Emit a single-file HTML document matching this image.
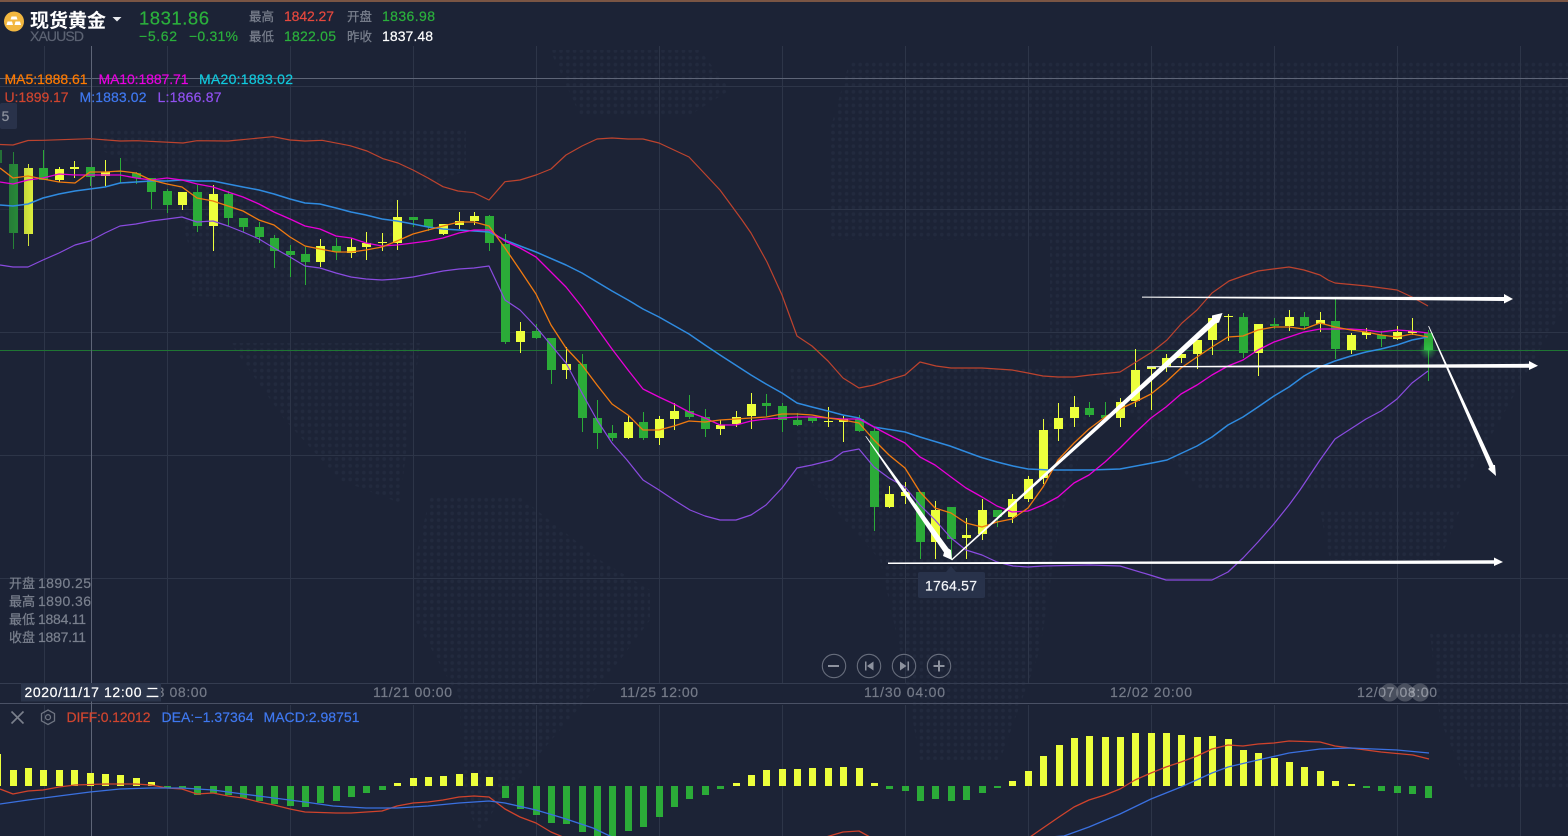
<!DOCTYPE html>
<html lang="zh">
<head>
<meta charset="utf-8">
<title>现货黄金 XAUUSD</title>
<style>
html,body{margin:0;padding:0;background:#1c2336;width:1568px;height:836px;overflow:hidden}
svg{display:block}
text{font-family:"Liberation Sans","Noto Sans CJK SC",sans-serif;font-size:14px;fill:currentColor;stroke:currentColor;stroke-width:.2}
.gr{color:#7a808e}
.cn{font-size:12.5px}
.cn2{font-size:13px}
.ax{color:#747a88}
</style>
</head>
<body>
<svg width="1568" height="836" viewBox="0 0 1568 836" xmlns="http://www.w3.org/2000/svg">
<defs>
<pattern id="dots" width="6.8" height="6.8" patternUnits="userSpaceOnUse"><circle cx="3.4" cy="3.4" r="1.8" fill="#222a3e"/></pattern>
<clipPath id="macd"><rect x="0" y="704" width="1568" height="132"/></clipPath>
<linearGradient id="dim" x1="0" x2="1" y1="0" y2="0"><stop offset="0" stop-color="#1c2336" stop-opacity=".45"/><stop offset="1" stop-color="#1c2336" stop-opacity="0"/></linearGradient>
<radialGradient id="glow"><stop offset="0" stop-color="#35d050" stop-opacity=".6"/><stop offset="1" stop-color="#35d050" stop-opacity="0"/></radialGradient>
</defs>
<rect width="1568" height="836" fill="#1c2336"/>
<rect width="1568" height="2" fill="#7a5544"/>

<!-- world map dots -->
<g fill="url(#dots)">
<polygon points="100,128 466,128 466,170 400,200 400,300 300,300 190,296 190,250 170,180 100,150"/>
<polygon points="550,50 700,50 730,90 690,115 580,115"/>
<polygon points="230,343 420,343 410,420 400,503 340,480 285,420"/>
<polygon points="430,497 520,497 600,560 650,590 650,620 620,660 560,730 500,800 480,833 462,800 460,700 415,620 415,560"/>
<polygon points="850,60 1568,60 1568,300 1500,420 1460,490 1320,490 1200,490 1100,380 1050,366 1050,240 830,240 830,130"/>
<polygon points="790,366 1060,366 1090,420 1060,520 1040,650 1000,760 920,760 900,650 880,560 800,470"/>
<polygon points="1320,510 1460,510 1440,560 1330,560"/>
<polygon points="1430,633 1568,633 1568,790 1470,790 1440,720"/>
</g>

<!-- grid -->
<path d="M44.5 46V683M167.5 46V683M290.5 46V683M413.5 46V683M536.5 46V683M659.5 46V683M782.5 46V683M905.5 46V683M1028.5 46V683M1151.5 46V683M1274.5 46V683M1397.5 46V683M1520.5 46V683M44.500 705V836M167.500 705V836M290.500 705V836M413.500 705V836M536.500 705V836M659.500 705V836M782.500 705V836M905.500 705V836M1028.500 705V836M1151.500 705V836M1274.500 705V836M1397.500 705V836M1520.500 705V836M0 86.5H1568M0 209.5H1568M0 332.5H1568M0 455.5H1568M0 578.5H1568" stroke="#2d3548" stroke-width="1" fill="none"/>
<path d="M0 683.5H1568" stroke="#343c50" stroke-width="1"/>
<path d="M0 703.5H1568" stroke="#4a5165" stroke-width="1"/>
<path d="M0 350.5H1568" stroke="#1f7533" stroke-width="1"/>
<path d="M0 78.5H1568M91.5 46V836" stroke="#5e6577" stroke-width="1" fill="none"/>

<!-- candles -->
<g shape-rendering="crispEdges">
<path stroke="#2bab38" stroke-width="1" fill="none" d="M13.5 152V249M43.5 150V180M90.5 167V186M120.5 158V183M136.5 172V184M151.5 178V209M167.5 189V213M197.5 185V232M228.5 191V226M243.5 218V232M259.5 222V243M274.5 235V268M290.5 245V277M305.5 247V285M336.5 238V260M413.5 217V227M428.5 219V231M489.5 215V251M505.5 234V344M536.5 324V339M551.5 338V384M582.5 354V432M597.5 400V449M612.5 425V441M643.5 412V440M689.5 395V419M705.5 409V437M766.5 394V416M782.5 403V432M797.5 413V426M812.5 417V423M859.5 415V432M874.5 428V531M920.5 492V559M951.5 507V560M997.5 510V527M1089.5 402V417M1105.5 402V420M1243.5 313V358M1274.5 318V329M1304.5 312V330M1335.5 299V359M1381.5 331V347M1428.5 330V381"/>
<path fill="#2bab38" d="M0 150h2V163H0zM9 164h9V233h-9zM39 168h9V180h-9zM86 167h9V177h-9zM116 171h9V172h-9zM132 173h9V178h-9zM147 178h9V192h-9zM163 191h9V205h-9zM193 192h9V226h-9zM224 194h9V218h-9zM239 218h9V227h-9zM255 227h9V237h-9zM270 238h9V251h-9zM286 251h9V255h-9zM301 254h9V262h-9zM332 246h9V252h-9zM409 217h9V220h-9zM424 219h9V227h-9zM485 216h9V243h-9zM501 244h9V342h-9zM532 331h9V338h-9zM547 338h9V370h-9zM578 364h9V418h-9zM593 418h9V433h-9zM608 433h9V438h-9zM639 422h9V438h-9zM685 411h9V417h-9zM701 417h9V429h-9zM762 403h9V406h-9zM778 406h9V420h-9zM793 420h9V425h-9zM808 417h9V421h-9zM855 419h9V431h-9zM870 431h9V507h-9zM916 492h9V542h-9zM947 507h9V539h-9zM993 510h9V517h-9zM1085 408h9V415h-9zM1101 415h9V418h-9zM1239 317h9V353h-9zM1270 324h9V326h-9zM1300 317h9V326h-9zM1331 321h9V349h-9zM1377 335h9V339h-9zM1424 333h9V350h-9z"/>
<path stroke="#ecff3c" stroke-width="1" fill="none" d="M28.5 164V246M59.5 167V182M74.5 161V178M105.5 160V186M182.5 192V210M213.5 185V251M320.5 239V267M351.5 238V258M366.5 232V260M382.5 233V251M397.5 200V250M443.5 224V235M459.5 212V229M474.5 212V225M520.5 322V353M566.5 347V379M628.5 416V439M659.5 416V445M674.5 403V430M720.5 420V435M736.5 411V427M751.5 393V429M828.5 407V427M843.5 416V442M889.5 486V508M905.5 482V504M935.5 501V559M966.5 518V559M982.5 499V540M1012.5 494V523M1028.5 476V502M1043.5 419V484M1058.5 403V441M1074.5 396V427M1120.5 398V427M1135.5 349V407M1151.5 367V410M1166.5 354V372M1181.5 354V363M1197.5 340V369M1212.5 316V355M1228.5 314V341M1258.5 324V376M1289.5 310V331M1320.5 312V332M1351.5 333V354M1366.5 328V339M1397.5 326V340M1412.5 318V335"/>
<path fill="#ecff3c" d="M24 168h9V234h-9zM55 169h9V180h-9zM70 167h9V169h-9zM101 172h9V176h-9zM178 192h9V205h-9zM209 194h9V226h-9zM316 246h9V262h-9zM347 247h9V253h-9zM362 243h9V247h-9zM378 242h9V243h-9zM393 217h9V243h-9zM439 224h9V234h-9zM455 221h9V225h-9zM470 216h9V221h-9zM516 331h9V342h-9zM562 364h9V370h-9zM624 422h9V438h-9zM655 419h9V438h-9zM670 411h9V419h-9zM716 425h9V429h-9zM732 417h9V424h-9zM747 404h9V416h-9zM824 421h9V422h-9zM839 419h9V422h-9zM885 494h9V507h-9zM901 492h9V496h-9zM931 510h9V542h-9zM962 535h9V538h-9zM978 510h9V534h-9zM1008 499h9V517h-9zM1024 479h9V499h-9zM1039 430h9V478h-9zM1054 418h9V429h-9zM1070 407h9V418h-9zM1116 402h9V418h-9zM1131 370h9V401h-9zM1147 367h9V369h-9zM1162 358h9V366h-9zM1177 354h9V358h-9zM1193 340h9V354h-9zM1208 318h9V340h-9zM1224 316h9V317h-9zM1254 324h9V353h-9zM1285 317h9V326h-9zM1316 320h9V324h-9zM1347 335h9V350h-9zM1362 332h9V335h-9zM1393 332h9V339h-9zM1408 331h9V333h-9z"/>
</g>
<rect x="0" y="140" width="40" height="120" fill="url(#dim)"/>
<circle cx="1428" cy="350" r="9" fill="url(#glow)"/>

<!-- bollinger / MA -->
<g fill="none" stroke-linejoin="round">
<polyline stroke="#bd432e" stroke-width="1.200" points="0,144.5 13,145 28,140.5 43,140.3 90,138.7 120,141 137,140.7 183,143 197,140.7 228,141 273,136.7 290,140 305,141 322,140.3 350,145.7 367,151 383,158.7 398,163 413,170 428,178 443,186.7 458,191 474,192.7 489,200 505,181.7 520,180 536,175 551,169 566,155 582,146 597,139 612,138 628,139 643,139 659,143 674,150 689,157 705,174 720,190 742,220 751,233 767,262 782,295 797,336 812,346 828,361 843,378 859,388 874,385 888,380 905,375 920,362 936,366 951,368 966,368 982,368 997,369 1012,370 1028,373 1043,376 1058,377 1074,377 1090,375 1120,372 1152,352 1167,340 1182,323 1197,310 1212,293 1229,281 1243,276 1258,271 1273,269 1289,267 1304,270 1320,275 1328,280 1335,283 1367,286 1397,290 1412,297 1428,306"/>
<polyline stroke="#8a4be0" stroke-width="1.200" points="0,265 13,267 28,267 43,260 59,253 75,245 90,241 105,233 120,226 136,224 151,221 167,219 182,217 197,222 213,221 228,226 243,232 259,239 274,248 290,257 305,266 320,268 336,273 351,277 366,279 382,280 397,279 413,277 428,274 443,271 459,269 474,268 489,266 505,300 520,310 536,327 551,345 566,363 582,393 597,420 612,443 627,460 643,480 659,490 674,500 690,510 705,516 720,520 736,520 751,515 766,505 782,488 797,468 812,465 832,460 843,452 859,449 874,467 889,478 905,487 920,505 935,520 951,538 966,550 982,555 997,562 1013,566 1028,567 1043,566 1090,565 1120,566 1150,575 1166,580 1181,580 1212,580 1228,572 1243,558 1258,542 1273,525 1289,505 1300,490 1320,460 1335,439 1366,419 1381,411 1397,399 1412,383 1428,371"/>
<polyline stroke="#2f8be0" stroke-width="1.500" points="0,205 13,206 28,204 43,198 59,194 75,191 90,189 105,187 120,183 136,182 151,181 167,181 182,180 197,181 213,181 228,184 243,187 259,190 274,194 290,199 305,203 320,204 336,208 351,212 366,215 382,219 397,221 413,224 428,227 443,229 459,230 474,231 489,232 505,240 520,246 536,252 566,265 582,273 612,291 628,300 643,309 659,317 689,334 705,345 720,355 751,375 766,384 782,393 797,403 812,407 828,411 843,415 859,418 874,427 905,432 920,437 950,446 980,457 997,462 1013,466 1028,469 1050,470 1090,470 1120,469 1152,463 1167,460 1182,453 1197,446 1212,437 1228,425 1243,417 1258,407 1274,396 1289,387 1304,376 1320,367 1335,361 1351,356 1366,352 1381,349 1397,345 1412,340 1428,337"/>
<polyline stroke="#e800d8" stroke-width="1.300" points="0,182 13,184 28,180 43,178 59,174 75,175 90,175 105,175 120,175 136,178 151,180 167,178 182,180 197,184 213,187 228,192 243,197 259,204 274,212 290,219 305,226 320,229 336,236 351,238 366,243 382,246 397,245 413,243 428,241 443,238 459,233 474,230 489,230 505,241 520,248 536,257 551,272 566,287 582,307 597,328 612,349 628,370 643,389 659,397 674,404 689,412 705,418 720,425 736,425 751,421 766,419 782,418 797,417 812,417 828,418 843,419 859,419 874,427 889,435 905,443 920,457 935,465 951,477 966,488 982,497 997,506 1012,512 1028,511 1043,505 1058,497 1074,483 1089,475 1105,462 1120,448 1135,433 1151,418 1166,407 1181,394 1197,385 1212,375 1228,366 1243,360 1258,350 1274,342 1289,337 1304,332 1320,329 1335,329 1351,329 1366,330 1381,332 1397,330 1412,331 1428,333"/>
<polyline stroke="#f07a10" stroke-width="1.300" points="0,168 13,178 28,176 43,179 59,182 75,183 90,172 105,172 120,171 136,173 151,180 167,184 182,187 197,198 213,201 228,206 243,211 259,220 274,225 290,237 305,246 320,249 336,252 351,252 366,250 382,247 397,241 413,234 428,230 443,226 459,222 474,222 489,226 505,248 520,270 536,294 551,325 566,348 582,365 597,385 612,404 628,415 643,430 659,430 674,426 689,421 705,422 720,420 736,419 751,418 766,417 782,414 797,414 812,415 828,418 843,420 859,423 874,440 889,455 905,468 920,492 935,508 951,513 966,523 982,527 997,522 1012,519 1028,508 1043,487 1058,460 1074,443 1089,429 1105,417 1120,409 1135,402 1151,394 1166,382 1181,368 1197,357 1212,347 1228,337 1243,336 1258,330 1274,327 1289,327 1304,329 1320,323 1335,327 1351,330 1366,332 1381,335 1397,337 1412,334 1428,337"/>
</g>

<!-- hand-drawn arrows -->
<g fill="#ffffff">
<polygon points="1142,296.6 1504,297 1504,294 1513,299 1504,303.5 1504,301 1142,297.6"/>
<polygon points="1147,366.2 1529,363.8 1529,361 1538,365.7 1529,370 1529,367.8 1147,367.2"/>
<polygon points="888,562.5 1494,560.2 1494,557.5 1503,562 1494,566 1494,563.800 888,564"/>
<polygon points="866,436 948.500,548.500 951,550 952,560 943,556 944,552.500 865.4,436.4"/>
<polygon points="952,560.5 1215.500,323.500 1219,322.5 1222.5,313 1212,315.5 1212,319 951.3,559.4"/>
<polygon points="1429,326 1493.500,465 1495,465 1496,476 1488,469 1489.500,467.500 1428.2,326.2"/>
</g>

<!-- tooltip -->
<path d="M946 572l5-6 5 6z" fill="#28324a"/>
<rect x="918" y="572" width="67" height="26" rx="2" fill="#28324a"/>
<text x="925" y="590.500" style="color:#f2f4f8" textLength="52">1764.57</text>

<!-- header -->
<circle cx="14" cy="21.5" r="10" fill="#f2b740"/>
<path d="M11.500 16.500h5l1 3h-7zM7.500 21.500h4.500l1 3.500h-6.500zM15.500 21.500h4.500l1 3.500h-6.500z" fill="#fff"/>
<text x="30" y="27" style="color:#ffffff;font-size:19px;font-weight:700;stroke-width:0">现货黄金</text>
<path d="M112.500 17h9l-4.500 4.500z" fill="#e8eaee"/>
<text x="30" y="41" style="color:#5c6373" textLength="54">XAUUSD</text>
<text x="139" y="24.500" style="color:#2bb03c;font-size:18.500px" textLength="70">1831.86</text>
<text x="139" y="41" style="color:#2bb03c" textLength="38">−5.62</text>
<text x="189" y="41" style="color:#2bb03c" textLength="49">−0.31%</text>
<text x="249" y="21" class="gr cn">最高</text>
<text x="284" y="21" style="color:#e6483e" textLength="50">1842.27</text>
<text x="347" y="21" class="gr cn">开盘</text>
<text x="382" y="21" style="color:#2bb03c" textLength="53">1836.98</text>
<text x="249" y="41" class="gr cn">最低</text>
<text x="284" y="41" style="color:#2bb03c" textLength="52">1822.05</text>
<text x="347" y="41" class="gr cn">昨收</text>
<text x="382" y="41" style="color:#ffffff" textLength="51">1837.48</text>

<!-- legends -->
<text x="4.500" y="84" style="color:#ff7a00" textLength="83">MA5:1888.61</text>
<text x="98.500" y="84" style="color:#e800e0" textLength="90">MA10:1887.71</text>
<text x="199" y="84" style="color:#10c8dc" textLength="94">MA20:1883.02</text>
<text x="4.500" y="102" style="color:#d0452f" textLength="64">U:1899.17</text>
<text x="79.500" y="102" style="color:#3f78f0" textLength="67">M:1883.02</text>
<text x="157.500" y="102" style="color:#9050f0" textLength="64">L:1866.87</text>
<rect x="0" y="103" width="17" height="26" rx="2" fill="#29324a"/>
<text x="1.500" y="121" style="color:#8d929e">5</text>

<!-- OHLC -->
<text x="9" y="588" class="gr cn2">开盘</text><text x="38" y="588" class="gr" textLength="53">1890.25</text>
<text x="9" y="606" class="gr cn2">最高</text><text x="38" y="606" class="gr" textLength="53">1890.36</text>
<text x="9" y="624" class="gr cn2">最低</text><text x="38" y="624" class="gr" textLength="48">1884.11</text>
<text x="9" y="642" class="gr cn2">收盘</text><text x="38" y="642" class="gr" textLength="48">1887.11</text>

<!-- zoom buttons -->
<g fill="none" stroke="#676d7c" stroke-width="1.100">
<circle cx="834" cy="666" r="11.700"/><circle cx="869" cy="666" r="11.700"/><circle cx="904" cy="666" r="11.700"/><circle cx="939" cy="666" r="11.700"/>
</g>
<path d="M828 665h11v2h-11zM933.500 665h11v2h-11zM938 660.500h2v11h-2z" fill="#8d929e"/>
<path d="M865 661.500h1.500v9H865zM873.500 661.500v9l-6.500-4.500zM907.500 661.500h1.500v9h-1.500zM900 661.500v9l6.500-4.500z" fill="#8d929e"/>

<!-- axis -->
<text x="128" y="697" class="ax" textLength="79">11/18 08:00</text>
<rect x="21" y="683" width="140" height="18.500" fill="#2b354b"/>
<text x="24.500" y="697" style="color:#ffffff" textLength="117">2020/11/17 12:00</text>
<text x="146" y="697" class="cn2" style="color:#ffffff">二</text>
<text x="373" y="697" class="ax" textLength="79">11/21 00:00</text>
<text x="620" y="697" class="ax" textLength="78">11/25 12:00</text>
<text x="864" y="697" class="ax" textLength="81">11/30 04:00</text>
<text x="1110" y="697" class="ax" textLength="82">12/02 20:00</text>
<text x="1357" y="697" class="ax" textLength="80">12/07 08:00</text>
<circle cx="1389.500" cy="692.500" r="9" fill="#fff" opacity=".2"/>
<circle cx="1405" cy="692.500" r="9" fill="#fff" opacity=".2"/>
<circle cx="1420" cy="692.500" r="9" fill="#fff" opacity=".2"/>

<!-- MACD -->
<path d="M11.500 711.500l12 12M23.500 711.500l-12 12" stroke="#7a808c" stroke-width="1.600" fill="none"/>
<path d="M48 710l6.500 3.600v7.300L48 724.500l-6.500-3.600v-7.300z" stroke="#6f7582" stroke-width="1.300" fill="none"/>
<circle cx="48" cy="717.200" r="2.500" stroke="#6f7582" stroke-width="1.300" fill="none"/>
<text x="66.500" y="722" style="color:#d0452f" textLength="84">DIFF:0.12012</text>
<text x="161.500" y="722" style="color:#3f78f0" textLength="92">DEA:−1.37364</text>
<text x="263.500" y="722" style="color:#3f78f0" textLength="96">MACD:2.98751</text>

<g clip-path="url(#macd)" shape-rendering="crispEdges">
<path fill="#ecff3c" d="M0 754h1V786H0zM10 770h7V786h-7zM25 768h7V786h-7zM40 770h7V786h-7zM56 770h7V786h-7zM71 770h7V786h-7zM87 773h7V786h-7zM102 774h7V786h-7zM117 775h7V786h-7zM133 778h7V786h-7zM148 782h7V786h-7zM394 783h7V786h-7zM410 778h7V786h-7zM425 777h7V786h-7zM440 776h7V786h-7zM456 774h7V786h-7zM471 773h7V786h-7zM486 777h7V786h-7zM733 783h7V786h-7zM748 775h7V786h-7zM763 770h7V786h-7zM779 769h7V786h-7zM794 769h7V786h-7zM809 768h7V786h-7zM825 768h7V786h-7zM840 767h7V786h-7zM856 768h7V786h-7zM871 783h7V786h-7zM1009 781h7V786h-7zM1025 771h7V786h-7zM1040 756h7V786h-7zM1056 745h7V786h-7zM1071 738h7V786h-7zM1086 736h7V786h-7zM1102 737h7V786h-7zM1117 737h7V786h-7zM1132 733h7V786h-7zM1148 733h7V786h-7zM1163 733h7V786h-7zM1178 735h7V786h-7zM1194 737h7V786h-7zM1209 736h7V786h-7zM1225 739h7V786h-7zM1240 750h7V786h-7zM1255 753h7V786h-7zM1271 758h7V786h-7zM1286 762h7V786h-7zM1301 767h7V786h-7zM1317 771h7V786h-7zM1332 781h7V786h-7zM1348 784h7V786h-7z"/>
<path fill="#2bab38" d="M164 786h7V788h-7zM179 786h7V788h-7zM194 786h7V795h-7zM210 786h7V793h-7zM225 786h7V795h-7zM240 786h7V798h-7zM256 786h7V801h-7zM271 786h7V804h-7zM287 786h7V806h-7zM302 786h7V807h-7zM317 786h7V803h-7zM333 786h7V801h-7zM348 786h7V797h-7zM363 786h7V793h-7zM379 786h7V790h-7zM502 786h7V798h-7zM517 786h7V809h-7zM533 786h7V815h-7zM548 786h7V823h-7zM563 786h7V824h-7zM579 786h7V832h-7zM594 786h7V836h-7zM609 786h7V836h-7zM625 786h7V831h-7zM640 786h7V827h-7zM656 786h7V817h-7zM671 786h7V807h-7zM686 786h7V799h-7zM702 786h7V795h-7zM717 786h7V789h-7zM886 786h7V789h-7zM902 786h7V791h-7zM917 786h7V801h-7zM932 786h7V799h-7zM948 786h7V801h-7zM963 786h7V800h-7zM979 786h7V793h-7zM994 786h7V788h-7zM1363 786h7V788h-7zM1378 786h7V791h-7zM1394 786h7V793h-7zM1409 786h7V794h-7zM1425 786h7V798h-7z"/>
</g>
<g clip-path="url(#macd)" fill="none" stroke-linejoin="round">
<polyline stroke="#d0432c" stroke-width="1.300" points="0,789 13,794 28,791 43,790 59,787 75,785 105,784 120,784 136,784 151,785 167,788 182,789 197,794 213,793 228,796 243,798 259,802 274,805 290,809 305,812 336,813 351,813 382,811 397,806 413,803 428,802 443,800 459,797 474,796 489,797 505,809 520,817 536,823 551,832 563,837 826,837 843,832 859,831 870,837 1030,837 1043,828 1059,817 1074,807 1089,800 1105,795 1120,789 1135,780 1151,773 1166,767 1181,762 1197,756 1212,749 1228,745 1243,746 1258,744 1274,743 1289,741 1320,742 1335,746 1351,748 1381,752 1413,755 1429,759"/>
<polyline stroke="#3a70e0" stroke-width="1.300" points="0,804 28,800 59,796 90,792 120,789 151,788 182,788 213,790 243,794 274,798 305,802 333,806 366,808 397,808 428,806 459,803 489,801 505,803 536,810 563,818 593,828 612,837 1050,837 1064,836 1089,827 1120,814 1151,799 1181,787 1212,773 1228,767 1258,760 1289,753 1320,749 1351,748 1397,750 1429,753"/>
</g>
</svg>
</body>
</html>
